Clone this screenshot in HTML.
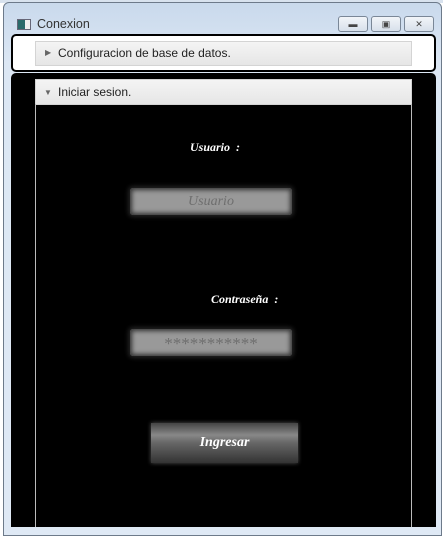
<!DOCTYPE html>
<html><head><style>
*{margin:0;padding:0;box-sizing:border-box}
body{width:443px;height:538px;background:#fff;position:relative;overflow:hidden;font-family:"Liberation Sans",sans-serif}
.win{position:absolute;left:3px;top:2px;width:439px;height:534px;background:linear-gradient(#c9d9ec,#dce7f4 60px,#dfe9f5);border:1px solid #6d7a8a;border-radius:6px 6px 0 0}
.title{position:absolute;left:33px;top:14px;font-size:12.5px;color:#333}
.ico{position:absolute;left:13px;top:16px;width:14px;height:11px;border:1px solid #667;background:linear-gradient(90deg,#2a6a6a 60%,#eee 60%)}
.btn{position:absolute;top:13px;width:30px;height:16px;border:1px solid #7a8797;border-radius:3px;background:linear-gradient(#f2f5f9,#d7e0eb);font-size:9px;text-align:center;line-height:14px;color:#444}
.white{position:absolute;left:11px;top:34px;width:425px;height:38px;background:#fff;border:2px solid #000;border-radius:5px}
.hdr{position:absolute;background:linear-gradient(#f4f4f4,#e6e6e6);border:1px solid #d4d4d4;font-size:12px;color:#222;line-height:22px;padding-left:22px}
.black{position:absolute;left:11px;top:73px;width:425px;height:454px;background:#000;border-radius:5px 5px 0 0}
.inner{position:absolute;left:35px;top:104px;width:377px;height:423px;border-left:1px solid #bbb;border-right:1px solid #bbb}
.lbl{position:absolute;font-family:"Liberation Serif",serif;font-style:italic;font-weight:bold;color:#fff;font-size:12px}
.tb{position:absolute;left:130px;width:162px;height:27px;background:#999;border-radius:3px;box-shadow:inset 0 0 5px 2px #333,0 0 4px 2px #222;font-family:"Liberation Serif",serif;font-style:italic;color:#6e6e6e;font-size:14px;text-align:center;line-height:27px}
.go{position:absolute;left:151px;top:423px;width:147px;height:40px;background:linear-gradient(#444,#888 30%,#666 50%,#333);box-shadow:0 0 4px #555;font-family:"Liberation Serif",serif;font-style:italic;font-weight:bold;color:#fff;font-size:14px;text-align:center;line-height:40px}
</style></head><body>
<div style="position:absolute;left:0;top:0;width:443px;height:3px;background:#d8e2ee"></div>
<div class="win">
<div class="ico"></div>
<div class="title">Conexion</div>
<div class="btn" style="left:334px">&#9644;</div>
<div class="btn" style="left:367px">&#9635;</div>
<div class="btn" style="left:400px">&#10005;</div>
</div>
<div class="white"></div>
<div class="hdr" style="left:35px;top:41px;width:377px;height:25px"><span style="position:absolute;left:9px;font-size:8px;color:#666">&#9654;</span>Configuracion de base de datos.</div>
<div class="black"></div>
<div class="hdr" style="left:35px;top:79px;width:377px;height:26px;line-height:25px"><span style="position:absolute;left:8px;font-size:8px;color:#666">&#9660;</span>Iniciar sesion.</div>
<div class="inner"></div>
<div class="lbl" style="left:190px;top:140px">Usuario&nbsp; :</div>
<div class="tb" style="top:188px">Usuario</div>
<div class="lbl" style="left:211px;top:292px">Contraseña&nbsp; :</div>
<div class="tb" style="top:329px;font-size:17px;font-style:normal;line-height:30px">***********</div>
<div class="go">Ingresar</div>
</body></html>
